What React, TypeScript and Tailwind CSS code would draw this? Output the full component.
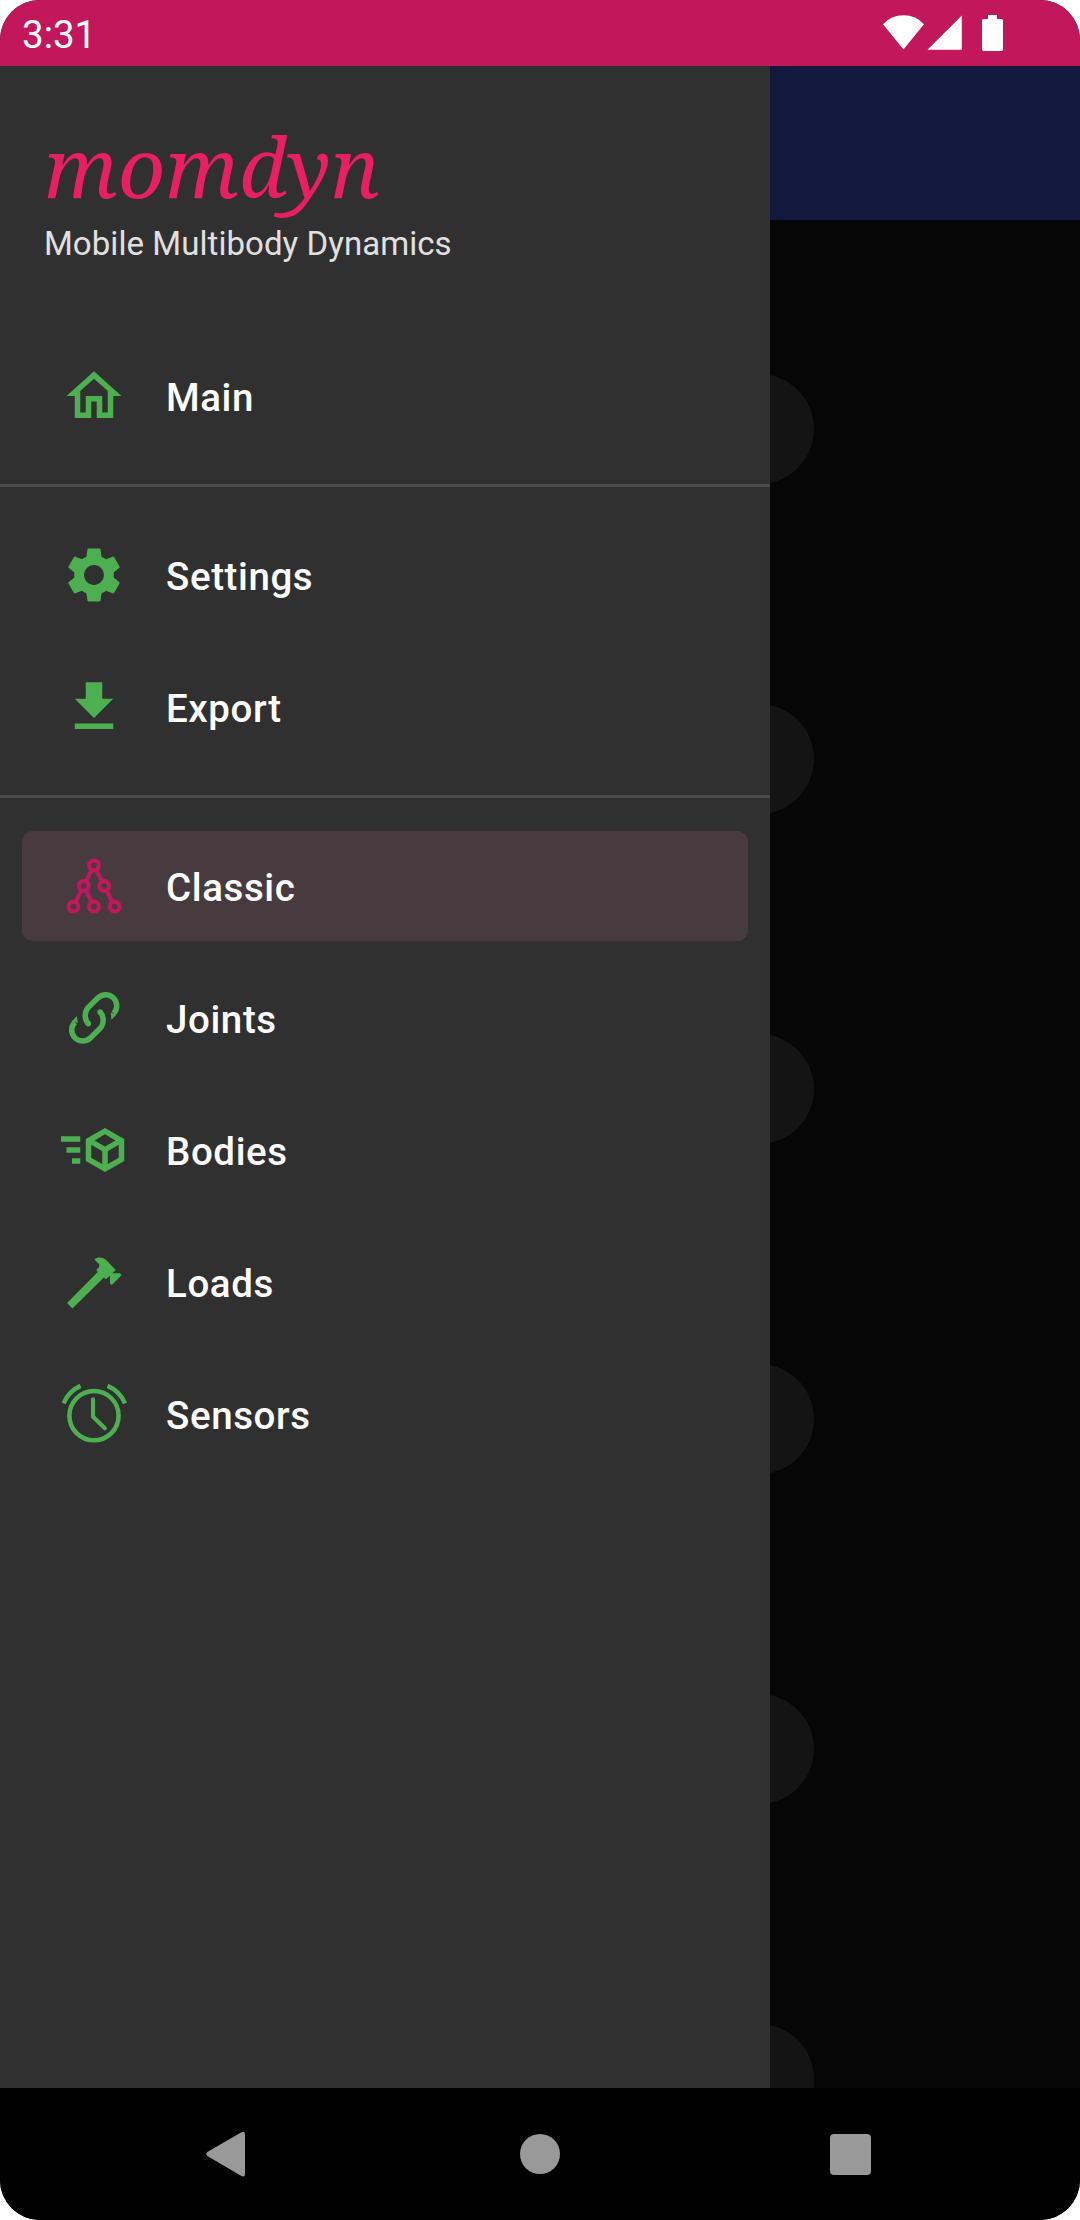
import type { ReactNode } from 'react';

const icons: Record<string, ReactNode> = {
  Main: <path d="M12 5.69l5 4.5V18h-2v-6H9v6H7v-7.81l5-4.5M12 3L2 12h3v8h6v-6h2v6h6v-8h3L12 3z" />,
  Settings: (
    <path d="M19.14 12.94c.04-.3.06-.61.06-.94 0-.32-.02-.64-.07-.94l2.03-1.58c.18-.14.23-.41.12-.61l-1.92-3.32c-.12-.22-.37-.29-.59-.22l-2.39.96c-.5-.38-1.03-.7-1.62-.94l-.36-2.54c-.04-.24-.24-.41-.48-.41h-3.84c-.24 0-.43.17-.47.41l-.36 2.54c-.59.24-1.13.57-1.62.94l-2.39-.96c-.22-.08-.47 0-.59.22L2.74 8.87c-.12.21-.08.47.12.61l2.03 1.58c-.05.3-.09.63-.09.94s.02.64.07.94l-2.03 1.58c-.18.14-.23.41-.12.61l1.92 3.32c.12.22.37.29.59.22l2.39-.96c.5.38 1.03.7 1.62.94l.36 2.54c.05.24.24.41.48.41h3.84c.24 0 .44-.17.47-.41l.36-2.54c.59-.24 1.13-.56 1.62-.94l2.39.96c.22.08.47 0 .59-.22l1.92-3.32c.12-.22.07-.47-.12-.61l-2.01-1.58zM12 15.6c-1.98 0-3.6-1.62-3.6-3.6s1.62-3.6 3.6-3.6 3.6 1.62 3.6 3.6-1.62 3.6-3.6 3.6z" />
  ),
  Export: <path d="M19 9h-4V3H9v6H5l7 7 7-7zM5 18v2h14v-2H5z" />,
  Classic: (
    <g fill="none" stroke="currentColor" strokeWidth="1.5">
      <circle cx="12" cy="4.5" r="1.78" />
      <circle cx="8.25" cy="12" r="1.78" />
      <circle cx="15.75" cy="12" r="1.78" />
      <circle cx="4.5" cy="19.5" r="1.78" />
      <circle cx="12" cy="19.5" r="1.78" />
      <circle cx="19.5" cy="19.5" r="1.78" />
      <path d="M11.2 6.1l-2.15 4.3M12.8 6.1l2.15 4.3M7.45 13.6L5.3 17.9M9.05 13.6l2.15 4.3M16.55 13.6l2.15 4.3" />
    </g>
  ),
  Joints: (
    <>
      {[0, 180].map((angle) => (
        <g key={angle} transform={`rotate(${angle} 12.08 11.95)`}>
          <path
            d="M9.95 14.1A4 4.3 0 0 1 9.87 8.2L13.4 4.7A4 4 0 0 1 19.1 10.35"
            fill="none"
            stroke="currentColor"
            strokeWidth="2"
          />
          <circle cx="9.95" cy="14.1" r="1" />
          <path d="M18.1 10l.25 2.6L20 10.9z" />
        </g>
      ))}
    </>
  ),
  Bodies: (
    <path
      fillRule="evenodd"
      d="M16 4L9 8.04v7.92L16 20l7-4.04V8.04zM16 6.31l3.8 2.19-3.8 2.19-3.79-2.19zM0 7v2h7V7zM11 10.11l4 2.31v4.69l-4-2.3zM21 10.11v4.7l-4 2.3v-4.69zM2 11v2h5v-2zM4 15v2h3v-2z"
    />
  ),
  Loads: (
    <path d="M2.2 19.6L13.4 8.4l-.6-.8 1.1-1.1V5.5L12.1 3.8c1.4-1.1 3.2-.9 4.5.4l3.3 3.4-1.2 1.2h2.8l.5.75-3.5 3.5-.7-.6V9.7l-1.5 1.3-.7-.6L4.15 21.6z" />
  ),
  Sensors: (
    <g fill="none" stroke="currentColor" strokeWidth="1.65">
      <circle cx="12" cy="12.6" r="8.95" />
      <path d="M.95 8.1A12 12 0 0 1 7.1 1.75M16.9 1.75A12 12 0 0 1 23.3 8.1" />
      <path d="M11.65 6.7v6.3l4.3 4.2" strokeWidth="1.5" strokeLinecap="round" strokeLinejoin="round" />
    </g>
  ),
};

const groups = [['Main'], ['Settings', 'Export'], ['Classic', 'Joints', 'Bodies', 'Loads', 'Sensors']];

function MenuItem({ label }: { label: string }) {
  const selected = label === 'Classic';
  return (
    <button
      className={`mx-[22px] flex h-[110px] items-center gap-[39px] rounded-[11px] pl-[39px] text-left ${selected ? 'bg-[#483b3f]' : ''}`}
    >
      <svg
        viewBox="0 0 24 24"
        fill="currentColor"
        className={`size-[66px] shrink-0 overflow-visible ${selected ? 'text-[#c2185b]' : 'text-[#4caf50]'}`}
      >
        {icons[label]}
      </svg>
      <span className="pt-[3px] text-[38.5px] leading-[45px] font-medium tracking-[0.6px] text-white">{label}</span>
    </button>
  );
}

function StatusBar() {
  return (
    <header className="flex h-[66px] items-center justify-between bg-[#c2185b] pr-[77px] pl-[22px] text-white">
      <span className="pt-[2px] text-[38.5px] leading-[45px]">3:31</span>
      <svg width="120" height="66" viewBox="883 0 120 66" fill="currentColor">
        <path d="M883 24.3Q891 15.2 903.5 15.2T924 24.3L903.5 49.5z" />
        <path d="M927.5 49.7h34.3V15.4z" />
        <path d="M988 15h9v4h4.3q1.7 0 1.7 1.7v28.6q0 1.7-1.7 1.7h-17.6q-1.7 0-1.7-1.7V20.7q0-1.7 1.7-1.7h4.3z" />
      </svg>
    </header>
  );
}

function Drawer() {
  return (
    <aside className="flex w-[770px] shrink-0 flex-col bg-[#303030]">
      <div className="h-[275px] px-[44px] pt-[44px]">
        <h1 className="font-['Noto_Serif','Liberation_Serif',serif] text-[82.5px] leading-[112px] whitespace-nowrap text-[#e91e63] italic">
          momdyn
        </h1>
        <p className="pt-[2px] text-[33px] leading-[39px] tracking-[0.06px] text-[#e0e0e0]">Mobile Multibody Dynamics</p>
      </div>
      <nav className="flex flex-col">
        {groups.map((items, index) => (
          <div key={index} className={`flex flex-col gap-[22px] ${index > 0 ? 'border-t-[3px] border-[#4a4a4a] pt-[33px]' : ''} pb-[33px]`}>
            {items.map((label) => (
              <MenuItem key={label} label={label} />
            ))}
          </div>
        ))}
      </nav>
    </aside>
  );
}

function DimmedPage() {
  return (
    <main className="flex flex-1 flex-col overflow-hidden">
      <div className="h-[154px] shrink-0 bg-gradient-to-r from-[#12173b] to-[#14193f] to-10%" />
      <div className="flex flex-col gap-[220px] pt-[154px]">
        {[0, 1, 2, 3, 4, 5].map((row) => (
          <div key={row} className="-ml-[66px] size-[110px] shrink-0 rounded-full bg-[#141414]" />
        ))}
      </div>
    </main>
  );
}

function NavigationBar() {
  return (
    <footer className="flex h-[132px] shrink-0 items-center bg-black text-[#999999]">
      <svg width="39" height="46" viewBox="0 0 39 46" fill="currentColor" className="ml-[206px]">
        <path d="M35 1.4Q39-.8 39 3.4v39.4q0 4.2-4 2L1.3 25Q-.8 23 1.3 21z" />
      </svg>
      <div className="ml-[275px] size-[40px] rounded-full bg-current" />
      <div className="mt-px ml-[270px] size-[41px] rounded-[4px] bg-current" />
    </footer>
  );
}

export default function App() {
  return (
    <div className="h-[2220px] w-[1080px] bg-white">
      <div className="flex h-full flex-col overflow-hidden rounded-[40px] bg-[#060606] font-['Roboto',sans-serif]">
        <StatusBar />
        <div className="flex h-[2022px] overflow-hidden">
          <Drawer />
          <DimmedPage />
        </div>
        <NavigationBar />
      </div>
    </div>
  );
}
